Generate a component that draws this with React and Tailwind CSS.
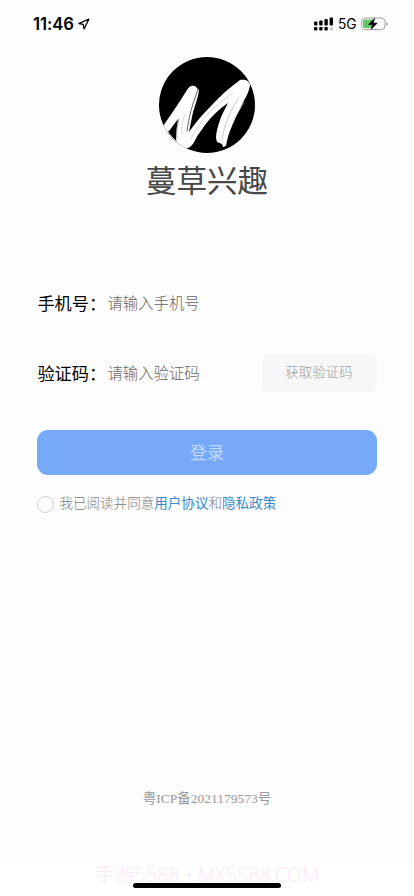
import { useState } from 'react'

const links = { terms: '用户协议', privacy: '隐私政策' }

function StatusBar() {
  return (
    <div className="flex h-12 items-center justify-between pl-[33px] pr-[26px] text-black">
      <div className="flex items-center gap-[4px]">
        <span className="w-[41px] font-['Inter'] text-[16.700px] leading-none font-semibold tracking-[-0.1px]">11:46</span>
        <svg className="h-[12px] w-[12px]" viewBox="0 0 12 12" fill="none" stroke="currentColor" strokeWidth="1.3" strokeLinejoin="round">
          <path d="M10.800 1.200.900 5.500l4.300.9.9 4.600z" />
        </svg>
      </div>
      <div className="flex items-center">
        <svg className="h-[14px] w-[20px]" viewBox="0 0 20 14" fill="currentColor">
          <rect x="0" y="4.5" width="3.4" height="4" rx="1" />
          <rect x="5.2" y="3.5" width="3.4" height="5" rx="1" />
          <rect x="10.4" y="2" width="3.4" height="6.5" rx="1" />
          <rect x="15.6" y="0.4" width="3.4" height="8.1" rx="1" />
          <rect x="0" y="10" width="3.4" height="3.4" rx="1" />
          <rect x="5.2" y="10" width="3.4" height="3.4" rx="1" />
          <rect x="10.4" y="10" width="3.4" height="3.4" rx="1" />
          <rect x="15.6" y="10" width="3.4" height="3.4" rx="1" fill="#c9c9c9" />
        </svg>
        <span className="ml-[4px] w-[19px] pt-px font-['Inter'] text-[13.800px] leading-none font-normal tracking-[-0.2px]">5G</span>
        <svg className="ml-[4px] h-[14px] w-[27px]" viewBox="0 0 27 14">
          <rect x="0.6" y="1" width="23.4" height="11.6" rx="3.6" fill="none" stroke="#a0a0a0" strokeWidth="1" />
          <path d="M4 2.5h8v8.6H4a2 2 0 0 1-2-2V4.500a2 2 0 0 1 2-2z" fill="#5fc763" />
          <path d="M25.300 5v4c1-.4 1.400-1.100 1.400-2s-.4-1.600-1.400-2z" fill="#a0a0a0" />
          <path d="M14.300.4 7 7.800h4.200L9.700 13.300l7.100-7.600h-4.200z" fill="#000" />
        </svg>
      </div>
    </div>
  )
}

function Logo() {
  return (
    <svg className="h-24 w-24" viewBox="0 0 96 96">
      <defs>
        <clipPath id="logo-clip">
          <circle cx="48" cy="48" r="48" />
        </clipPath>
      </defs>
      <circle cx="48" cy="48" r="48" fill="#000" />
      <g clipPath="url(#logo-clip)">
        <path
          d="M2 72C11 59 20 46 28 33c2-4 5-5 8-4l4 4c-1 9-5 17-7 27l-3 15C36 66 43 58 51 50 61 39 71 30 81 23c5-1 9 0 10 5-1 8-5 13-8 19-4 8-7 14-10 22-3 7-5 13-6 20l-3 1-1-3-5-2-1-4c0-6 2-12 4-18 2-6 5-11 8-17C60 52 52 60 46 68l-7 10c-3 5-5 10-8 12-3 2-7 2-10-1-3-2-4-5-4-9 0-6 1-12 2-18L10 74 5 78z"
          fill="#fff"
        />
        <g fill="none" strokeLinecap="round">
          <path d="M39 32c-3 10-7 19-9 30l-2 12" stroke="#222" strokeWidth=".7" />
          <path d="M26 57c-3 9-4 15-3 20" stroke="#bbb" strokeWidth=".6" />
          <path d="M32 82C40 65 54 49 74 36" stroke="#bbb" strokeWidth=".6" />
          <path d="M80 41C71 54 65 68 63 83" stroke="#aaa" strokeWidth=".6" />
          <path d="M84 46c-4 8-8 14-10 20M85 44c-4 7-6 13-10 17" stroke="#ddd" strokeWidth=".6" />
          <path d="M9 75c5 7 9 10 15 14" stroke="#fff" strokeWidth=".9" />
          <path d="M20 62c-2 8-3 14-2 19" stroke="#555" strokeWidth=".6" />
        </g>
      </g>
    </svg>
  )
}

export default function App() {
  const [phone, setPhone] = useState('')
  const [code, setCode] = useState('')
  const [agreed, setAgreed] = useState(false)

  return (
    <div className="flex h-[896px] w-full flex-col overflow-hidden bg-white font-['Noto_Sans_CJK_SC',sans-serif]">
      <div className="flex h-[863px] shrink-0 flex-col bg-[#fdfdfd]">
        <StatusBar />

        <header className="mt-[9px] flex flex-col items-center">
          <Logo />
          <h1 className="mt-[4px] text-[30.6px] leading-[44px] font-normal text-[#484848]">蔓草兴趣</h1>
        </header>

        <form className="mt-[83px] pr-[37.5px] pl-[37.400px]" onSubmit={(e) => e.preventDefault()}>
          <div className="flex h-[38px] items-center">
            <label htmlFor="phone" className="w-[70px] shrink-0 text-[17.200px] whitespace-nowrap text-black">手机号：</label>
            <input id="phone" value={phone} onChange={(e) => setPhone(e.target.value)} placeholder="请输入手机号"
              className="min-w-0 flex-1 bg-transparent text-[15.400px] font-light outline-none placeholder:text-[#666]" />
          </div>

          <div className="mt-8 flex h-[38px] items-center">
            <label htmlFor="code" className="w-[70px] shrink-0 text-[17.200px] whitespace-nowrap text-black">验证码：</label>
            <input id="code" value={code} onChange={(e) => setCode(e.target.value)} placeholder="请输入验证码"
              className="min-w-0 flex-1 bg-transparent text-[15.400px] font-light outline-none placeholder:text-[#666]" />
            <button type="button" className="h-[38px] w-[115px] shrink-0 rounded-[5px] bg-[#f7f7f7] pb-[3px] text-[13.500px] font-light text-[#999]">
              获取验证码
            </button>
          </div>

          <button type="submit" className="mt-[38px] h-[45px] w-full rounded-[11px] bg-[#76aaf8] pb-[2px] text-[17.200px] font-normal text-[#c0d8fc]">
            登录
          </button>

          <div className="mt-[15px] flex h-[26px] items-center text-[13.550px] font-light text-[#808080]">
            <button type="button" aria-label="同意" onClick={() => setAgreed(!agreed)}
              className={`mt-[3px] mr-[5px] h-[17px] w-[17px] shrink-0 rounded-full border ${agreed ? 'border-[#76aaf8] bg-[#76aaf8]' : 'border-[#cfcfcf] bg-white'}`} />
            <p className="mb-[2px] whitespace-nowrap">
              我已阅读并同意<a className="font-normal text-[#3a8acb]">{links.terms}</a>和<a className="font-normal text-[#3a8acb]">{links.privacy}</a>
            </p>
          </div>
        </form>

        <footer className="mt-auto mb-[54px] text-center font-['Liberation_Serif','Noto_Sans_CJK_SC',serif] text-[13.500px] leading-5 text-[#999]">
          粤ICP备2021179573号
        </footer>
      </div>

      <div className="flex h-[33px] flex-col items-center">
        <span className="h-[20px] font-['Noto_Sans','Noto_Sans_CJK_SC',sans-serif] text-[19.800px] leading-[24px] font-light whitespace-nowrap text-[#fce8f9]">手游5588 • MX5588.COM</span>
        <div className="z-10 h-[5px] w-[148px] rounded-full bg-black" />
      </div>
    </div>
  )
}
